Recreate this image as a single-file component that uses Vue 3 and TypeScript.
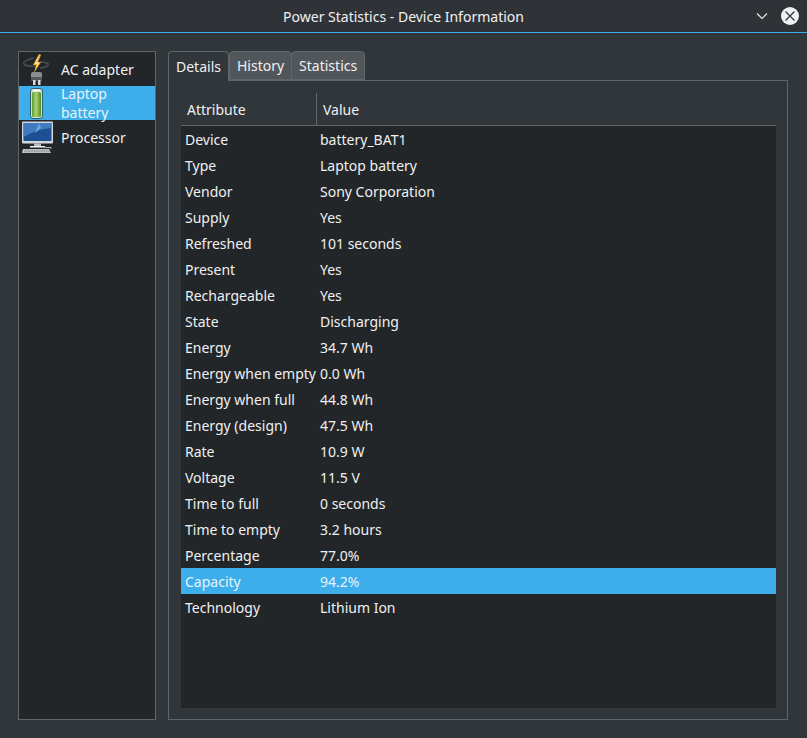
<script setup lang="ts">
const devices = [
  { id: "ac", label: "AC adapter" },
  { id: "battery", label: "Laptop battery" },
  { id: "cpu", label: "Processor" },
];

const tabs = ["Details", "History", "Statistics"];

const rows = [
  ["Device", "battery_BAT1"],
  ["Type", "Laptop battery"],
  ["Vendor", "Sony Corporation"],
  ["Supply", "Yes"],
  ["Refreshed", "101 seconds"],
  ["Present", "Yes"],
  ["Rechargeable", "Yes"],
  ["State", "Discharging"],
  ["Energy", "34.7 Wh"],
  ["Energy when empty", "0.0 Wh"],
  ["Energy when full", "44.8 Wh"],
  ["Energy (design)", "47.5 Wh"],
  ["Rate", "10.9 W"],
  ["Voltage", "11.5 V"],
  ["Time to full", "0 seconds"],
  ["Time to empty", "3.2 hours"],
  ["Percentage", "77.0%"],
  ["Capacity", "94.2%"],
  ["Technology", "Lithium Ion"],
];
</script>

<template>
  <div class="window">
    <div class="titlebar">
      <span class="title">Power Statistics - Device Information</span>
      <svg class="chevron" width="12" height="8" viewBox="0 0 12 8">
        <path d="M1 1.5 L6 6.5 L11 1.5" fill="none" stroke="#eff0f1" stroke-width="1.1" />
      </svg>
      <span class="close">
        <svg width="18" height="18" viewBox="0 0 18 18">
          <path d="M4.5 4.5 L13.5 13.5 M13.5 4.5 L4.5 13.5" stroke="#31363b" stroke-width="1.3" />
        </svg>
      </span>
    </div>

    <div class="content">
      <div class="devices">
        <div
          v-for="d in devices"
          :key="d.id"
          class="device"
          :class="{ selected: d.id === 'battery' }"
        >
          <span class="device-icon">
            <svg v-if="d.id === 'ac'" width="32" height="32" viewBox="0 0 32 32">
              <path d="M13 5 C5 7 0 10 4 12 C8 14 12 13 15 13" fill="none" stroke="#4d4f50" stroke-width="1.4" />
              <path d="M19 9 C25 9 30 11 26 13 C24 14 21 15 19 15" fill="none" stroke="#4d4f50" stroke-width="1.4" />
              <path d="M18 1 L12 12 L15 12 L13 20 L20 9 L17 9 L20 2 Z" fill="#f2b33d" />
              <path d="M17 3 L14 11 L16.5 11 L15.5 15 L18 9.5 L15.7 9.5 Z" fill="#fbe6a4" />
              <path d="M10 21 Q10 19 12 19 L19 19 Q21 19 21 21 L21 26 Q21 28 19 28 L12 28 Q10 28 10 26 Z" fill="#8c8f90" />
              <rect x="10" y="24" width="11" height="4" fill="#55585a" />
              <rect x="12" y="27" width="2.5" height="5" fill="#d9dadb" />
              <rect x="17" y="27" width="2.5" height="5" fill="#d9dadb" />
            </svg>
            <svg v-else-if="d.id === 'battery'" width="32" height="32" viewBox="0 0 32 32">
              <defs>
                <linearGradient id="cell" x1="0" y1="0" x2="1" y2="0">
                  <stop offset="0" stop-color="#5d9a35" />
                  <stop offset="0.45" stop-color="#a9d86d" />
                  <stop offset="1" stop-color="#4f8a2b" />
                </linearGradient>
              </defs>
              <rect x="9.5" y="1.5" width="12" height="30" rx="2.5" fill="#c9e2d6" stroke="#2f5f68" stroke-width="1" />
              <rect x="11" y="5" width="9" height="25" rx="1.5" fill="url(#cell)" />
              <rect x="12" y="2.5" width="7" height="2" fill="#f2f6f2" />
            </svg>
            <svg v-else width="32" height="32" viewBox="0 0 32 32">
              <rect x="1" y="0.5" width="31" height="22" rx="1" fill="#d4d6d8" />
              <rect x="2.5" y="2" width="28" height="18" fill="#1c4f94" />
              <path d="M2.5 2 H30.5 V7 Q16 8 2.5 16 Z" fill="#3f7bc0" />
              <path d="M18 2 L14 12 L20 7 Z" fill="#6ea2d8" />
              <rect x="13" y="22.5" width="7" height="3" fill="#b8babc" />
              <rect x="9" y="25" width="15" height="1.5" fill="#f0f1f2" />
              <path d="M2 28 H28 L30 32 H1 Z" fill="#c4c6c8" />
              <path d="M4 29.2 H28 M3 30.7 H29" stroke="#6a6d70" stroke-width="0.7" stroke-dasharray="1 0.7" />
              <path d="M24 26.5 H30 V28" fill="none" stroke="#b8babc" stroke-width="1" />
            </svg>
          </span>
          <span class="device-label">{{ d.label }}</span>
        </div>
      </div>

      <div class="tabs">
        <div class="tabbar">
          <div
            v-for="(t, i) in tabs"
            :key="t"
            class="tab"
            :class="{ active: i === 0 }"
          >
            {{ t }}
          </div>
        </div>
        <div class="pane">
          <div class="header">
            <div class="col-attr head-cell">Attribute</div>
            <div class="col-val head-cell with-sep">Value</div>
          </div>
          <div class="table">
            <div
              v-for="r in rows"
              :key="r[0]"
              class="row"
              :class="{ selected: r[0] === 'Capacity' }"
            >
              <div class="col-attr">{{ r[0] }}</div>
              <div class="col-val">{{ r[1] }}</div>
            </div>
          </div>
        </div>
      </div>
    </div>
  </div>
</template>

<style scoped>
* {
  box-sizing: border-box;
}

.window {
  width: 807px;
  height: 738px;
  display: flex;
  flex-direction: column;
  background: #31363b;
  color: #eff0f1;
  font-family: "Noto Sans", sans-serif;
  font-size: 14px;
  overflow: hidden;
}

.titlebar {
  position: relative;
  height: 33px;
  flex-shrink: 0;
  display: flex;
  align-items: center;
  justify-content: center;
  background: #2f3338;
  border-bottom: 1px solid #3daee9;
}

.title {
  color: #eff0f1;
}

.chevron {
  position: absolute;
  left: 756px;
  top: 12px;
}

.close {
  position: absolute;
  left: 781px;
  top: 7px;
  width: 18px;
  height: 18px;
  border-radius: 50%;
  background: #eff0f1;
  display: flex;
}

.content {
  flex: 1;
  display: flex;
  gap: 12px;
  padding: 18px 19px 18px 18px;
}

.devices {
  width: 138px;
  background: #232629;
  border: 1px solid #61666a;
  flex-shrink: 0;
}

.device {
  height: 34px;
  display: flex;
  align-items: center;
  gap: 8px;
  padding-left: 2px;
}

.device.selected {
  background: #3daee9;
}

.device.selected .device-label {
  color: #e6f4fb;
}

.device-icon {
  width: 32px;
  height: 32px;
  flex-shrink: 0;
  display: flex;
}

.tabs {
  flex: 1;
  display: flex;
  flex-direction: column;
  min-width: 0;
}

.tabbar {
  display: flex;
  height: 30px;
  margin-bottom: -1px;
  position: relative;
}

.tab {
  height: 29px;
  margin-top: 0;
  padding: 0 7px;
  display: flex;
  align-items: center;
  background: #51565b;
  border: 1px solid #61666a;
  border-radius: 4px 4px 0 0;
  margin-left: -1px;
}

.tab.active {
  background: #31363b;
  height: 30px;
  margin-left: 0;
  border-bottom: none;
  margin-right: 1px;
}

.pane {
  flex: 1;
  border: 1px solid #61666a;
  padding: 12px 11px 11px 12px;
  display: flex;
  flex-direction: column;
  min-height: 0;
}

.header {
  height: 33px;
  display: flex;
  align-items: center;
  border-bottom: 1px solid #61666a;
  flex-shrink: 0;
}

.head-cell {
  height: 32px;
  display: flex;
  align-items: center;
}

.head-cell.col-attr {
  padding-left: 6px;
}

.with-sep {
  border-left: 1px solid #61666a;
  padding-left: 6px;
}

.table {
  flex: 1;
  background: #232629;
}

.row {
  height: 26px;
  display: flex;
  align-items: center;
}

.row.selected {
  background: #3daee9;
  color: #e6f4fb;
}

.col-attr {
  width: 135px;
  flex-shrink: 0;
  white-space: nowrap;
}

.row .col-attr {
  padding-left: 4px;
}

.row .col-val {
  padding-left: 4px;
}
</style>

<style>
body {
  background: #31363b;
}
</style>
